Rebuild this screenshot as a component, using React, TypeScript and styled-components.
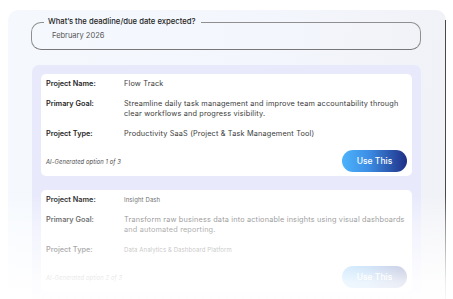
import styled, { createGlobalStyle } from 'styled-components'

const GlobalStyle = createGlobalStyle`
  html, body {
    margin: 0;
    padding: 0;
    background: #ffffff;
  }
  body {
    font-family: Inter, "Noto Sans", sans-serif;
  }
`

interface Option {
  name: string
  goal: string
  type: string
  index: number
  small?: boolean
}

const OPTIONS: Option[] = [
  {
    name: 'Flow Track',
    goal: 'Streamline daily task management and improve team accountability through clear workflows and progress visibility.',
    type: 'Productivity SaaS (Project & Task Management Tool)',
    index: 1,
  },
  {
    name: 'Insight Dash',
    goal: 'Transform raw business data into actionable insights using visual dashboards and automated reporting.',
    type: 'Data Analytics & Dashboard Platform',
    index: 2,
    small: true,
  },
]

const Page = styled.div`
  position: relative;
  width: 453px;
  height: 299px;
  overflow: hidden;
  padding-top: 10px;
  box-sizing: border-box;

  &::after {
    content: '';
    position: absolute;
    left: 0;
    right: 0;
    top: 195px;
    bottom: 0;
    background: linear-gradient(
      to bottom,
      rgba(255, 255, 255, 0) 0%,
      rgba(255, 255, 255, 0.4) 28%,
      rgba(255, 255, 255, 0.68) 58%,
      rgba(255, 255, 255, 0.9) 84%,
      rgba(255, 255, 255, 0.95) 100%
    );
    pointer-events: none;
  }
`

const Panel = styled.div`
  position: relative;
  margin-left: 8px;
  width: 438px;
  min-height: 320px;
  padding-top: 7px;
  box-sizing: border-box;
  border-radius: 10px 10px 0 0;
  background: linear-gradient(100deg, #f5f9fe 0%, #f3f6fc 55%, #f0f1f6 100%);

  &::after {
    content: '';
    position: absolute;
    right: 0;
    top: 10px;
    bottom: 0;
    width: 1px;
    background: #4a4a4a;
  }
`

const Field = styled.fieldset`
  margin: 0 25px 0 23px;
  padding: 4px 12px 8px 12px;
  border: 1px solid #8f8f8f;
  border-bottom-color: #777;
  border-radius: 10px;
  min-width: 0;
`

const FieldLegend = styled.legend`
  padding: 0 5px 0 4px;
  font-size: 7.7px;
  line-height: 10px;
  font-weight: 500;
  color: #1e1e1e;
`

const FieldValue = styled.div`
  padding-left: 8px;
  font-size: 7.5px;
  line-height: 10px;
  color: #555;
`

const OptionsBox = styled.div`
  margin: 15px 25px 0 24px;
  padding: 9px;
  display: flex;
  flex-direction: column;
  gap: 14px;
  background: #e8eafc;
  border-radius: 7px;
`

const Card = styled.div`
  background: #ffffff;
  border-radius: 5px;
  padding: 5px 4px 4px 5px;
  display: flex;
  flex-direction: column;
  gap: 10px;
`

const Row = styled.div`
  display: grid;
  grid-template-columns: 78px 1fr;
  font-size: 7.3px;
  line-height: 10px;
`

const Label = styled.div`
  font-weight: 600;
  color: #262626;
`

const Value = styled.div<{ $small?: boolean; $muted?: boolean }>`
  font-size: ${(p) => (p.$small ? '6px' : '7.3px')};
  letter-spacing: ${(p) => (p.$small ? '0.1px' : '0.18px')};
  color: ${(p) => (p.$muted ? '#6a6a6a' : '#3a3a3a')};
`

const Footer = styled.div`
  margin-top: 1px;
  padding-right: 1px;
  display: flex;
  align-items: center;
  justify-content: space-between;
`

const Note = styled.span`
  font-size: 5.8px;
  font-style: italic;
  letter-spacing: 0.1px;
  color: #4a4a4a;
`

const UseButton = styled.button`
  width: 65px;
  height: 22px;
  border: none;
  border-radius: 11px;
  background: linear-gradient(90deg, #4db3fb 0%, #3d8fe6 40%, #1f2f86 100%);
  color: #ffffff;
  font-family: inherit;
  font-size: 8.5px;
  font-weight: 500;
  padding: 0;
  cursor: pointer;
`

function OptionCard({ option }: { option: Option }) {
  const muted = option.index > 1
  return (
    <Card>
      <Row>
        <Label>Project Name:</Label>
        <Value $small={option.small} $muted={muted}>
          {option.name}
        </Value>
      </Row>
      <Row>
        <Label>Primary Goal:</Label>
        <Value $muted={muted}>{option.goal}</Value>
      </Row>
      <Row>
        <Label>Project Type:</Label>
        <Value $small={option.small} $muted={muted}>
          {option.type}
        </Value>
      </Row>
      <Footer>
        <Note>AI-Generated option {option.index} of 3</Note>
        <UseButton>Use This</UseButton>
      </Footer>
    </Card>
  )
}

export default function App() {
  return (
    <>
      <GlobalStyle />
      <Page>
        <Panel>
          <Field>
            <FieldLegend>What’s the deadline/due date expected?</FieldLegend>
            <FieldValue>February 2026</FieldValue>
          </Field>
          <OptionsBox>
            {OPTIONS.map((o) => (
              <OptionCard key={o.index} option={o} />
            ))}
          </OptionsBox>
        </Panel>
      </Page>
    </>
  )
}
